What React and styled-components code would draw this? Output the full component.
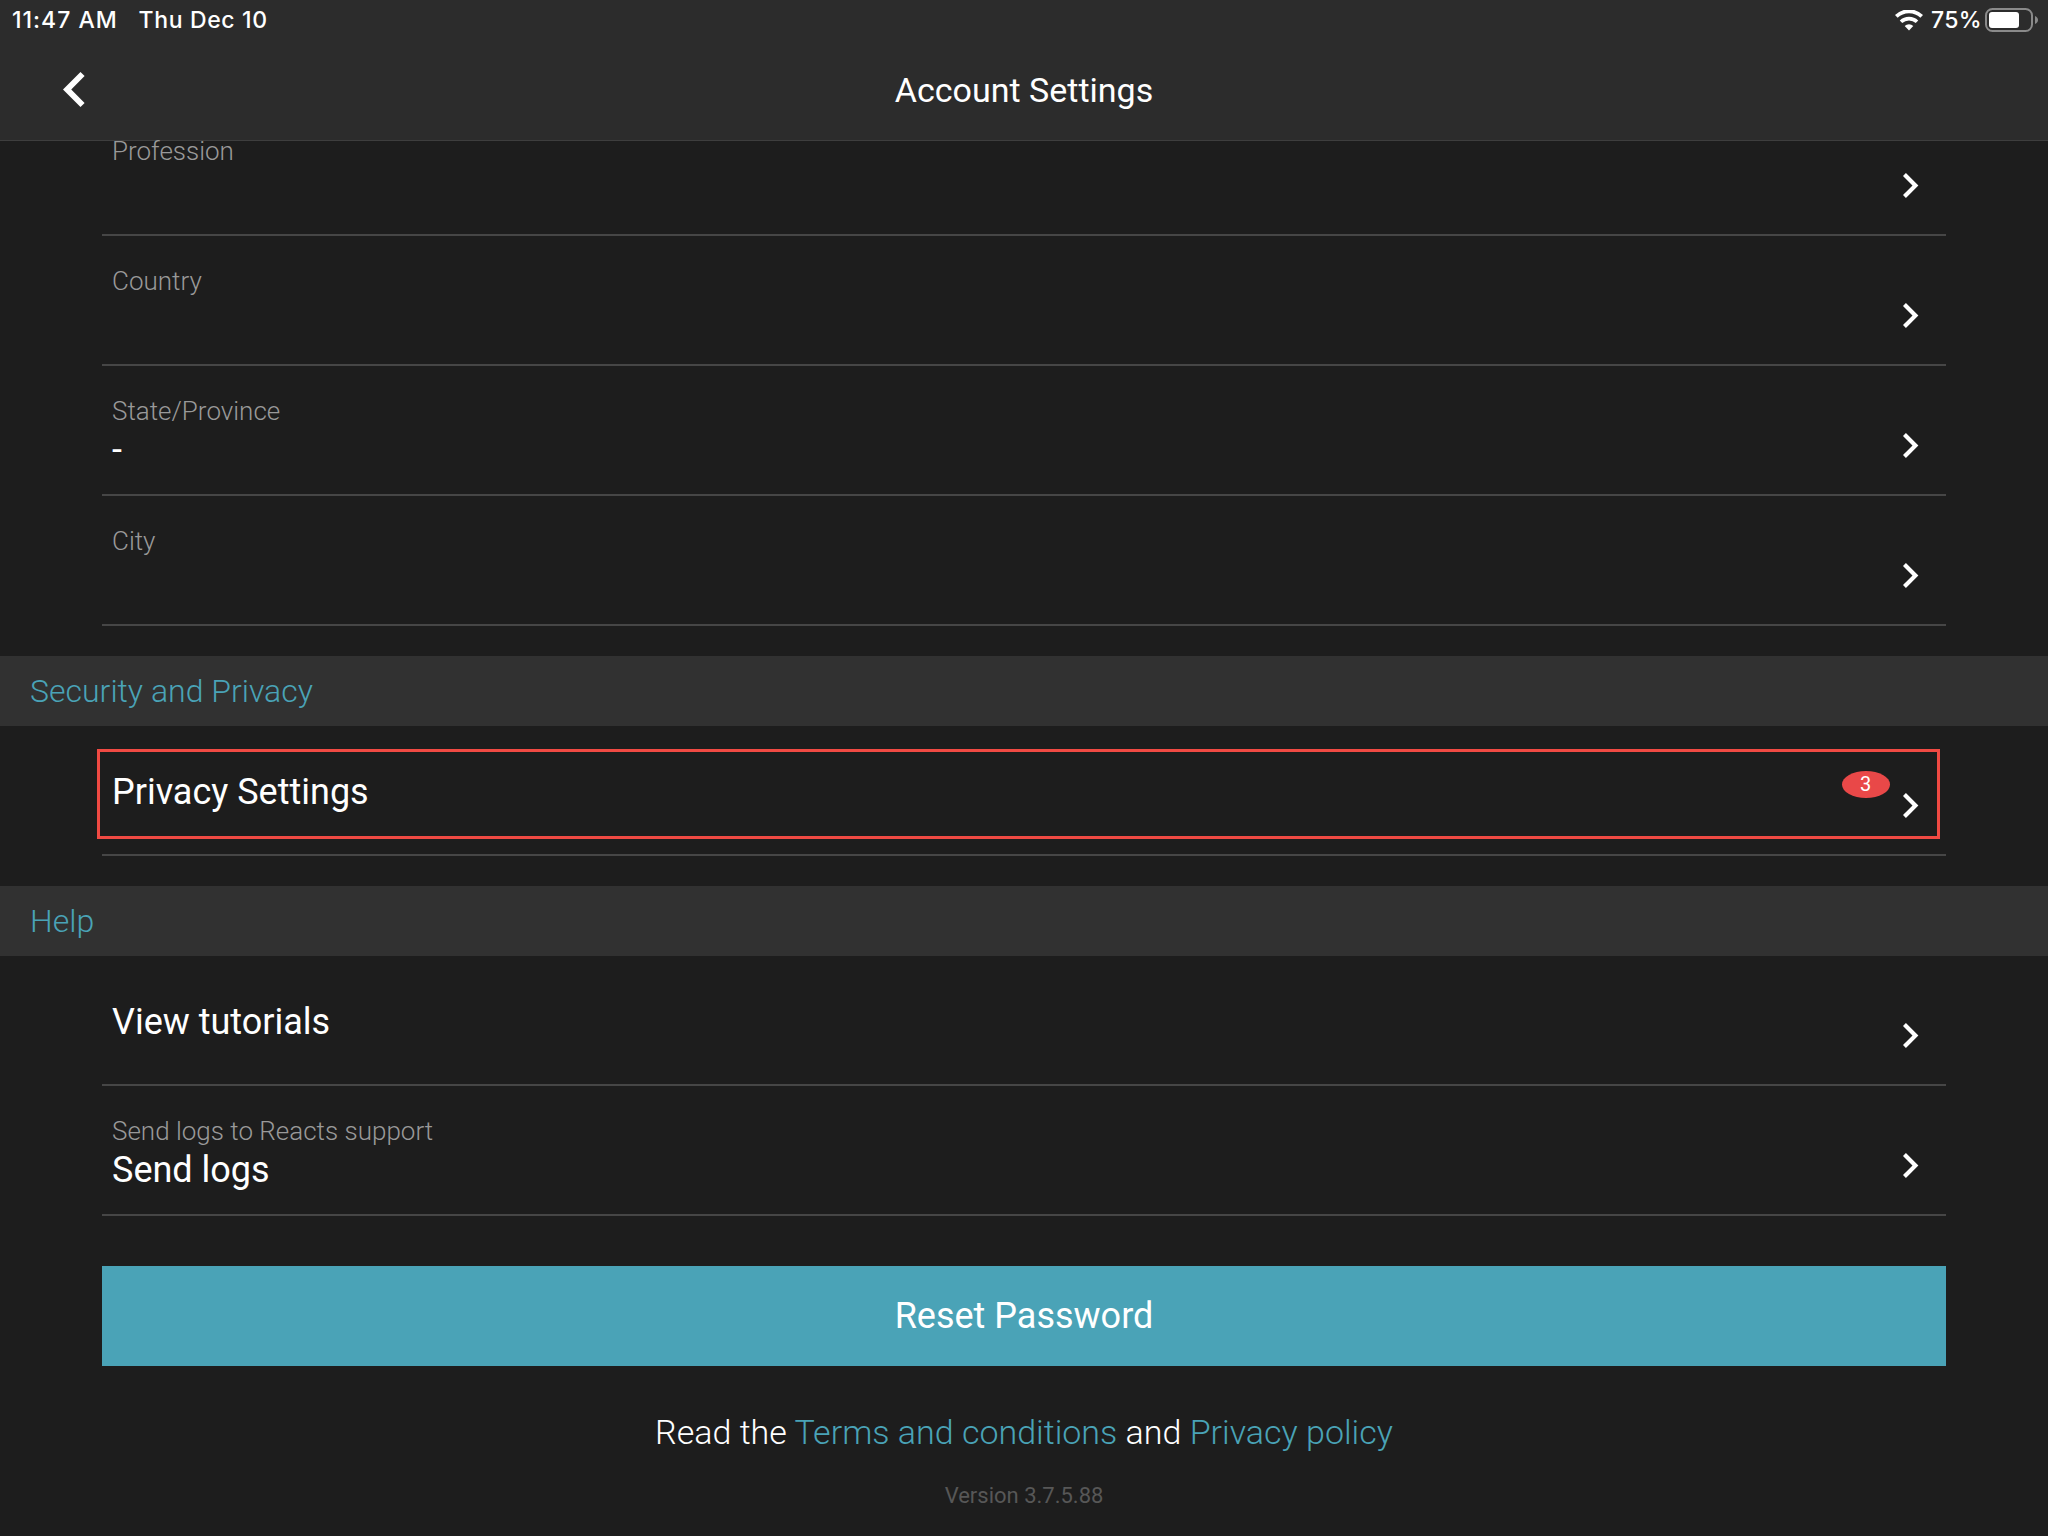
import React from "react";
import styled, { createGlobalStyle } from "styled-components";

const color = {
  page: "#1d1d1d",
  header: "#2c2c2c",
  section: "#313131",
  divider: "#464646",
  accent: "#4aa3b7",
  alert: "#e94848",
  outline: "#f04a43",
  label: "#999999",
  muted: "#575757",
  white: "#ffffff",
};

const GlobalStyle = createGlobalStyle`
  * {
    box-sizing: border-box;
  }
  body {
    margin: 0;
    background: ${color.page};
    color: ${color.white};
    font-family: Roboto, "Noto Sans", sans-serif;
  }
`;

const Screen = styled.div`
  display: flex;
  flex-direction: column;
  width: 2048px;
  height: 1536px;
  overflow: hidden;
  background: ${color.page};
`;

const Header = styled.header`
  flex: none;
  height: 141px;
  background: ${color.header};
  border-bottom: 1px solid #3e3e3e;
`;

const StatusBar = styled.div`
  display: flex;
  justify-content: space-between;
  height: 40px;
  padding: 5px 9px 0 12px;
  font: 500 23px/30px Inter, sans-serif;
`;

const StatusGroup = styled.div`
  display: flex;
  align-items: flex-start;
`;

const StatusText = styled.span`
  width: ${(p) => p.$width}px;
  letter-spacing: ${(p) => p.$spacing}px;
  white-space: nowrap;
`;

const WifiIcon = styled.svg`
  width: 28px;
  height: 21px;
  margin: 4.5px 8px 0 0;
`;

const BatteryIcon = styled.svg`
  width: 54px;
  height: 24px;
  margin-top: 3px;
`;

const NavBar = styled.div`
  display: grid;
  grid-template-columns: 150px 1fr 150px;
  align-items: center;
  height: 100px;
`;

const BackButton = styled.button`
  display: flex;
  margin: 0 0 2px;
  padding: 0 0 0 63px;
  border: 0;
  background: none;
`;

const BackIcon = styled.svg`
  width: 21.6px;
  height: 35px;
  fill: ${color.white};
`;

const Title = styled.h1`
  margin: 0;
  font-size: 34px;
  line-height: 40px;
  font-weight: 400;
  text-align: center;
`;

const Content = styled.main`
  flex: 1;
  min-height: 0;
`;

const List = styled.div`
  margin: ${(p) => (p.$scrolled ? -35 : 0)}px 102px ${(p) => p.$gap}px;
`;

const Row = styled.div`
  position: relative;
  display: flex;
  justify-content: space-between;
  align-items: flex-start;
  height: 130px;
  padding: 0 27.5px 0 10px;
  border-bottom: 2px solid ${color.divider};
`;

const RowText = styled.div`
  display: flex;
  flex-direction: column;
  gap: 3px;
  padding-top: ${(p) => (p.$single ? 45 : 30)}px;
`;

const Label = styled.span`
  font-size: 26px;
  line-height: 30px;
  font-weight: 300;
  color: ${color.label};
`;

const Value = styled.span`
  font-size: 36px;
  line-height: 42px;
`;

const RowEnd = styled.div`
  display: flex;
  align-items: flex-start;
  gap: 13.5px;
`;

const ChevronIcon = styled.svg`
  width: 15.4px;
  height: 25px;
  margin-top: 67.3px;
  fill: ${color.white};
`;

const Badge = styled.span`
  width: 48px;
  height: 27px;
  margin-top: 45px;
  border-radius: 50%;
  background: ${color.alert};
  font-size: 20px;
  line-height: 26px;
  text-align: center;
`;

const Highlight = styled.div`
  position: absolute;
  top: 23px;
  left: -5px;
  width: 1843px;
  height: 90px;
  border: 3px solid ${color.outline};
  pointer-events: none;
`;

const SectionTitle = styled.h2`
  margin: 0;
  padding: 16px 30px;
  background: ${color.section};
  color: ${color.accent};
  font-size: 32px;
  line-height: 38px;
  font-weight: 300;
`;

const ResetButton = styled.button`
  display: block;
  width: 1844px;
  height: 100px;
  margin: 0 auto;
  padding: 0;
  border: 0;
  background: ${color.accent};
  color: ${color.white};
  font: 400 36px/42px Roboto, sans-serif;
`;

const Legal = styled.p`
  margin: 46px 0 31px;
  font-size: 34px;
  line-height: 40px;
  font-weight: 300;
  text-align: center;
`;

const LegalLink = styled.a`
  color: ${color.accent};
`;

const Version = styled.p`
  margin: 0;
  color: ${color.muted};
  font-size: 22px;
  line-height: 25px;
  text-align: center;
`;

function SettingRow({ label, value, badge, highlighted }) {
  return (
    <Row>
      <RowText $single={!label}>
        {label && <Label>{label}</Label>}
        {value && <Value>{value}</Value>}
      </RowText>
      <RowEnd>
        {badge && <Badge>{badge}</Badge>}
        <ChevronIcon viewBox="8.59 6 7.41 12" preserveAspectRatio="none">
          <path d="M10 6L8.59 7.41 13.17 12l-4.58 4.59L10 18l6-6z" />
        </ChevronIcon>
      </RowEnd>
      {highlighted && <Highlight />}
    </Row>
  );
}

export default function App() {
  return (
    <>
      <GlobalStyle />
      <Screen>
        <Header>
          <StatusBar>
            <StatusGroup>
              <StatusText $width={126.5} $spacing={1}>11:47 AM</StatusText>
              <StatusText $width={140} $spacing={0.65}>Thu Dec 10</StatusText>
            </StatusGroup>
            <StatusGroup>
              <WifiIcon viewBox="0 0 28 21">
                <path d="M1.3 6.4a18.2 18.2 0 0 1 25.4 0" fill="none" stroke="#fff" strokeWidth="3.8" />
                <path d="M6 11.8a11.6 11.6 0 0 1 16 0" fill="none" stroke="#fff" strokeWidth="3.6" />
                <path d="M14 20.4l-4.3-4.3a6.2 6.2 0 0 1 8.6 0z" fill="#fff" />
              </WifiIcon>
              <StatusText $width={54} $spacing={0.3}>75%</StatusText>
              <BatteryIcon viewBox="0 0 54 24">
                <rect x="1" y="1" width="46" height="22" rx="6.5" fill="none" stroke="#8a8a8a" strokeWidth="2" />
                <rect x="4" y="4" width="30" height="16" rx="3" fill="#fff" />
                <path d="M50 8c4 1.5 4 6.5 0 8z" fill="#8a8a8a" />
              </BatteryIcon>
            </StatusGroup>
          </StatusBar>
          <NavBar>
            <BackButton aria-label="Back">
              <BackIcon viewBox="8 6 7.41 12">
                <path d="M15.41 7.41L14 6l-6 6 6 6 1.41-1.41L10.83 12z" />
              </BackIcon>
            </BackButton>
            <Title>Account Settings</Title>
          </NavBar>
        </Header>
        <Content>
          <List $scrolled $gap={30}>
            <SettingRow label="Profession" />
            <SettingRow label="Country" />
            <SettingRow label="State/Province" value="-" />
            <SettingRow label="City" />
          </List>
          <SectionTitle>Security and Privacy</SectionTitle>
          <List $gap={30}>
            <SettingRow value="Privacy Settings" badge="3" highlighted />
          </List>
          <SectionTitle>Help</SectionTitle>
          <List $gap={50}>
            <SettingRow value="View tutorials" />
            <SettingRow label="Send logs to Reacts support" value="Send logs" />
          </List>
          <ResetButton>Reset Password</ResetButton>
          <Legal>
            Read the <LegalLink>Terms and conditions</LegalLink> and <LegalLink>Privacy policy</LegalLink>
          </Legal>
          <Version>Version 3.7.5.88</Version>
        </Content>
      </Screen>
    </>
  );
}
